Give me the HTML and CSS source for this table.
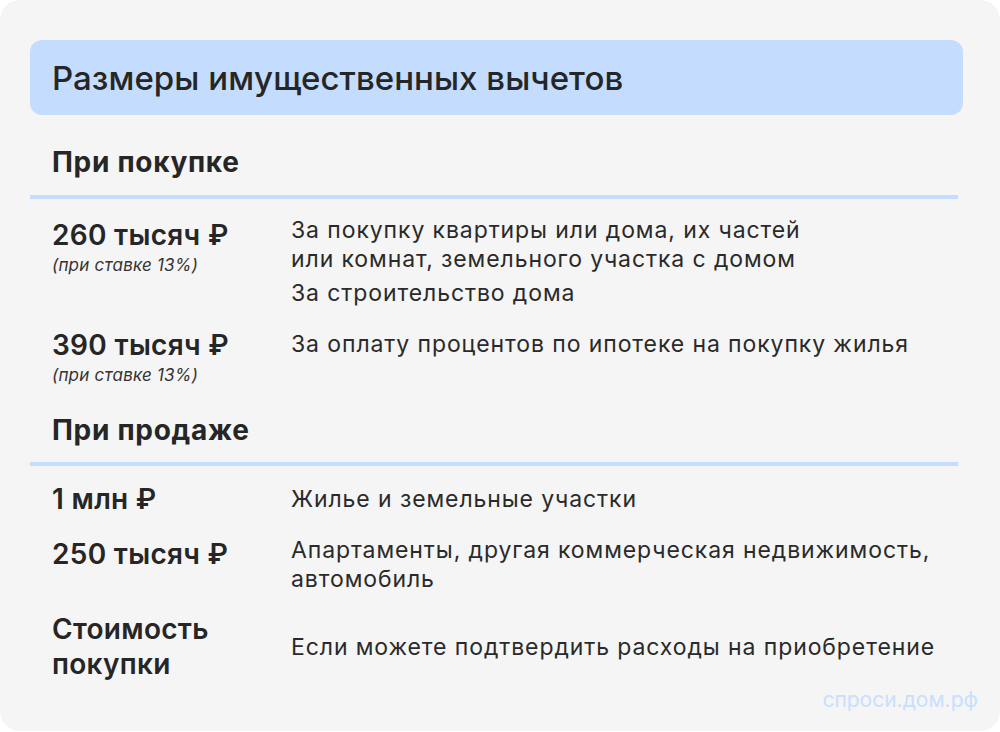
FILE: index.html
```html
<!DOCTYPE html>
<html lang="ru">
<head>
<meta charset="utf-8">
<link rel="stylesheet" href="styles.css">
</head>
<body>
<div class="card">
  <div class="header"><h1 class="title">Размеры имущественных вычетов</h1></div>

  <h2 class="section">При покупке</h2>
  <div class="divider"></div>

  <div class="row row-first">
    <div class="amount">260 тысяч ₽<span class="note">(при ставке 13%)</span></div>
    <div class="desc">
      <p class="para">За покупку квартиры или дома, их частей<br>или комнат, земельного участка с домом</p>
      <p class="para">За строительство дома</p>
    </div>
  </div>

  <div class="row row-second">
    <div class="amount">390 тысяч ₽<span class="note">(при ставке 13%)</span></div>
    <div class="desc"><p class="para">За оплату процентов по ипотеке на покупку жилья</p></div>
  </div>

  <h2 class="section section-sale">При продаже</h2>
  <div class="divider divider-sale"></div>

  <div class="row row-sale1">
    <div class="amount">1 млн ₽</div>
    <div class="desc"><p class="para">Жилье и земельные участки</p></div>
  </div>

  <div class="row row-sale2">
    <div class="amount">250 тысяч ₽</div>
    <div class="desc"><p class="para">Апартаменты, другая коммерческая недвижимость,<br>автомобиль</p></div>
  </div>

  <div class="row row-center">
    <div class="amount amount-two">Стоимость<br>покупки</div>
    <div class="desc"><p class="para">Если можете подтвердить расходы на приобретение</p></div>
  </div>

  <div class="footer"><span class="brand">спроси.дом.рф</span></div>
</div>
</body>
</html>
```
FILE: styles.css
```css
* { box-sizing: border-box; }
html, body { margin: 0; padding: 0; background: #ffffff; }
body {
  font-family: Inter, "Noto Sans", "DejaVu Sans", sans-serif;
  color: #2a2a2a;
}
.card {
  width: 1000px;
  height: 731px;
  background: #f5f5f5;
  border-radius: 20px;
  padding: 40px 22px 0 30px;
  display: flex;
  flex-direction: column;
}
.header {
  height: 75px;
  margin-right: 15px;
  background: #c4dcfd;
  border-radius: 12px;
  display: flex;
  align-items: center;
  padding-left: 22px;
}
.title {
  margin: 0;
  font-size: 33px;
  line-height: 40px;
  font-weight: 500;
  letter-spacing: 0.05px;
  color: #262626;
}
.section {
  margin: 30px 0 0 22px;
  font-size: 28px;
  line-height: 34px;
  font-weight: 700;
  letter-spacing: 0.7px;
  color: #262626;
}
.section-sale { margin-top: 23px; }
.divider {
  height: 4px;
  width: 928px;
  background: #c4dcfd;
  margin-top: 16px;
}
.divider-sale { margin-top: 15px; }
.row {
  display: grid;
  grid-template-columns: 239px 1fr;
  padding-left: 22px;
  align-items: start;
}
.row-first { margin-top: 20px; }
.row-first .desc { margin-top: -3px; }
.row-second { margin-top: 21px; }
.row-second .desc { margin-top: 1px; }
.row-sale1 { margin-top: 17px; }
.row-sale1 .desc { margin-top: 2px; }
.row-sale2 { margin-top: 23px; }
.row-sale2 .desc { margin-top: -2px; }
.row-center { margin-top: 18px; align-items: center; }
.amount {
  font-size: 28px;
  line-height: 32px;
  font-weight: 600;
  letter-spacing: 0.3px;
  color: #262626;
  display: flex;
  flex-direction: column;
}
.amount-two { line-height: 35px; display: block; }
.note {
  font-size: 17px;
  line-height: 29px;
  font-style: italic;
  font-weight: 400;
  letter-spacing: 0.2px;
  color: #333333;
}
.para {
  margin: 0 0 5px;
  font-size: 23px;
  line-height: 29px;
  letter-spacing: 0.9px;
  color: #2a2a2a;
}
.para:last-child { margin-bottom: 0; }
.footer {
  margin-top: auto;
  padding-bottom: 19px;
  display: flex;
  justify-content: flex-end;
}
.brand {
  font-size: 21px;
  line-height: 25px;
  color: #cadffd;
}
```
